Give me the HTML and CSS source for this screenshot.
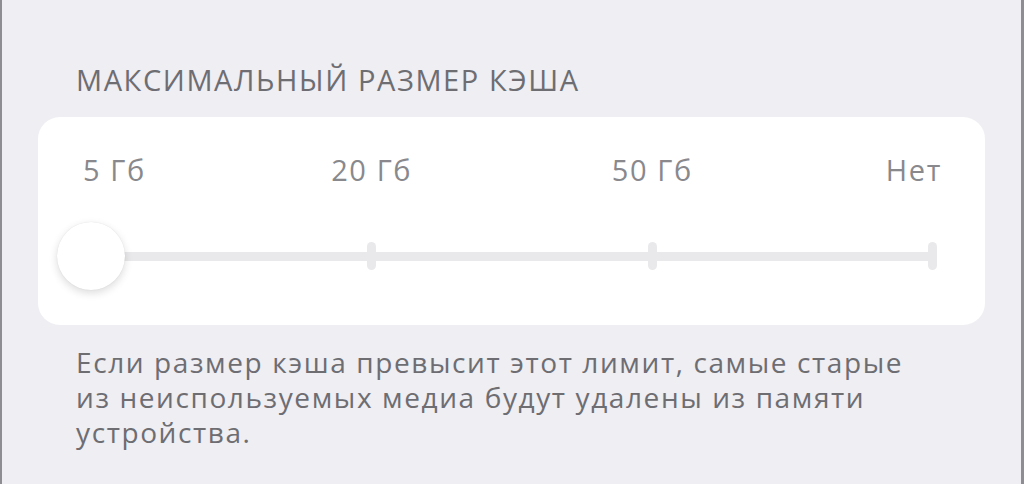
FILE: index.html
```html
<!DOCTYPE html>
<html lang="ru">
<head>
  <meta charset="UTF-8">
  <title>Максимальный размер кэша</title>
  <link rel="stylesheet" href="styles.css">
</head>
<body>
  <div class="screen">
    <h2 class="section-title">МАКСИМАЛЬНЫЙ РАЗМЕР КЭША</h2>

    <div class="card">
      <div class="stops">
        <span class="stop first">5 Гб</span>
        <span class="stop">20 Гб</span>
        <span class="stop">50 Гб</span>
        <span class="stop last">Нет</span>
      </div>

      <div class="slider">
        <span class="tick"></span>
        <span class="tick"></span>
        <span class="tick"></span>
        <span class="tick"></span>
        <span class="thumb"></span>
      </div>
    </div>

    <p class="footnote">Если размер кэша превысит этот лимит, самые старые из неиспользуемых медиа будут удалены из памяти устройства.</p>
  </div>
</body>
</html>
```

FILE: styles.css
```css
html, body {
  margin: 0;
  height: 100%;
}

body {
  background: #efeef3;
  font-family: 'Open Sans', 'Liberation Sans', sans-serif;
  letter-spacing: 1.6px;
}

.screen {
  box-sizing: border-box;
  height: 100%;
  border-left: 2px solid #8e8e92;
  border-right: 3px solid #8e8e92;
  padding-top: 63px;
  overflow: hidden;
}

.section-title {
  margin: 0 0 0 74px;
  font-size: 29px;
  line-height: 34px;
  font-weight: normal;
  color: #6d6d72;
}

.card {
  margin: 20px 36px 0 36px;
  background: #fff;
  border-radius: 22px;
  padding: 36px 0 35px;
}

/* labels: first and last hug the ends, middle ones sit over their ticks */
.stops {
  display: grid;
  grid-template-columns: repeat(6, 1fr);
  margin: 0 52px 0 53px;
  font-size: 29px;
  line-height: 34px;
  color: #89898d;
}

.stop {
  grid-column: span 2;
  justify-self: center;
}

.stop.first {
  grid-column: span 1;
  justify-self: start;
  margin-left: -8px;
}

.stop.last {
  grid-column: span 1;
  justify-self: end;
  margin-right: -9px;
}

.slider {
  position: relative;
  display: flex;
  justify-content: space-between;
  align-items: center;
  height: 68px;
  margin: 35px 48px 0 49px;
}

.slider::before {
  content: "";
  position: absolute;
  left: 0;
  right: 0;
  top: 30px;
  height: 9px;
  border-radius: 4.5px;
  background: #e9e9eb;
}

.tick {
  position: relative;
  width: 9px;
  height: 28px;
  border-radius: 4.5px;
  background: #e9e9eb;
}

.thumb {
  position: absolute;
  left: -30px;
  top: 0;
  width: 68px;
  height: 68px;
  border-radius: 50%;
  background: #fff;
  box-shadow: 0 3px 8px rgba(0, 0, 0, 0.14), 0 0 1px rgba(0, 0, 0, 0.12);
}

.footnote {
  margin: 20px 90px 0 74px;
  font-size: 28px;
  line-height: 35px;
  color: #6d6d72;
}
```
